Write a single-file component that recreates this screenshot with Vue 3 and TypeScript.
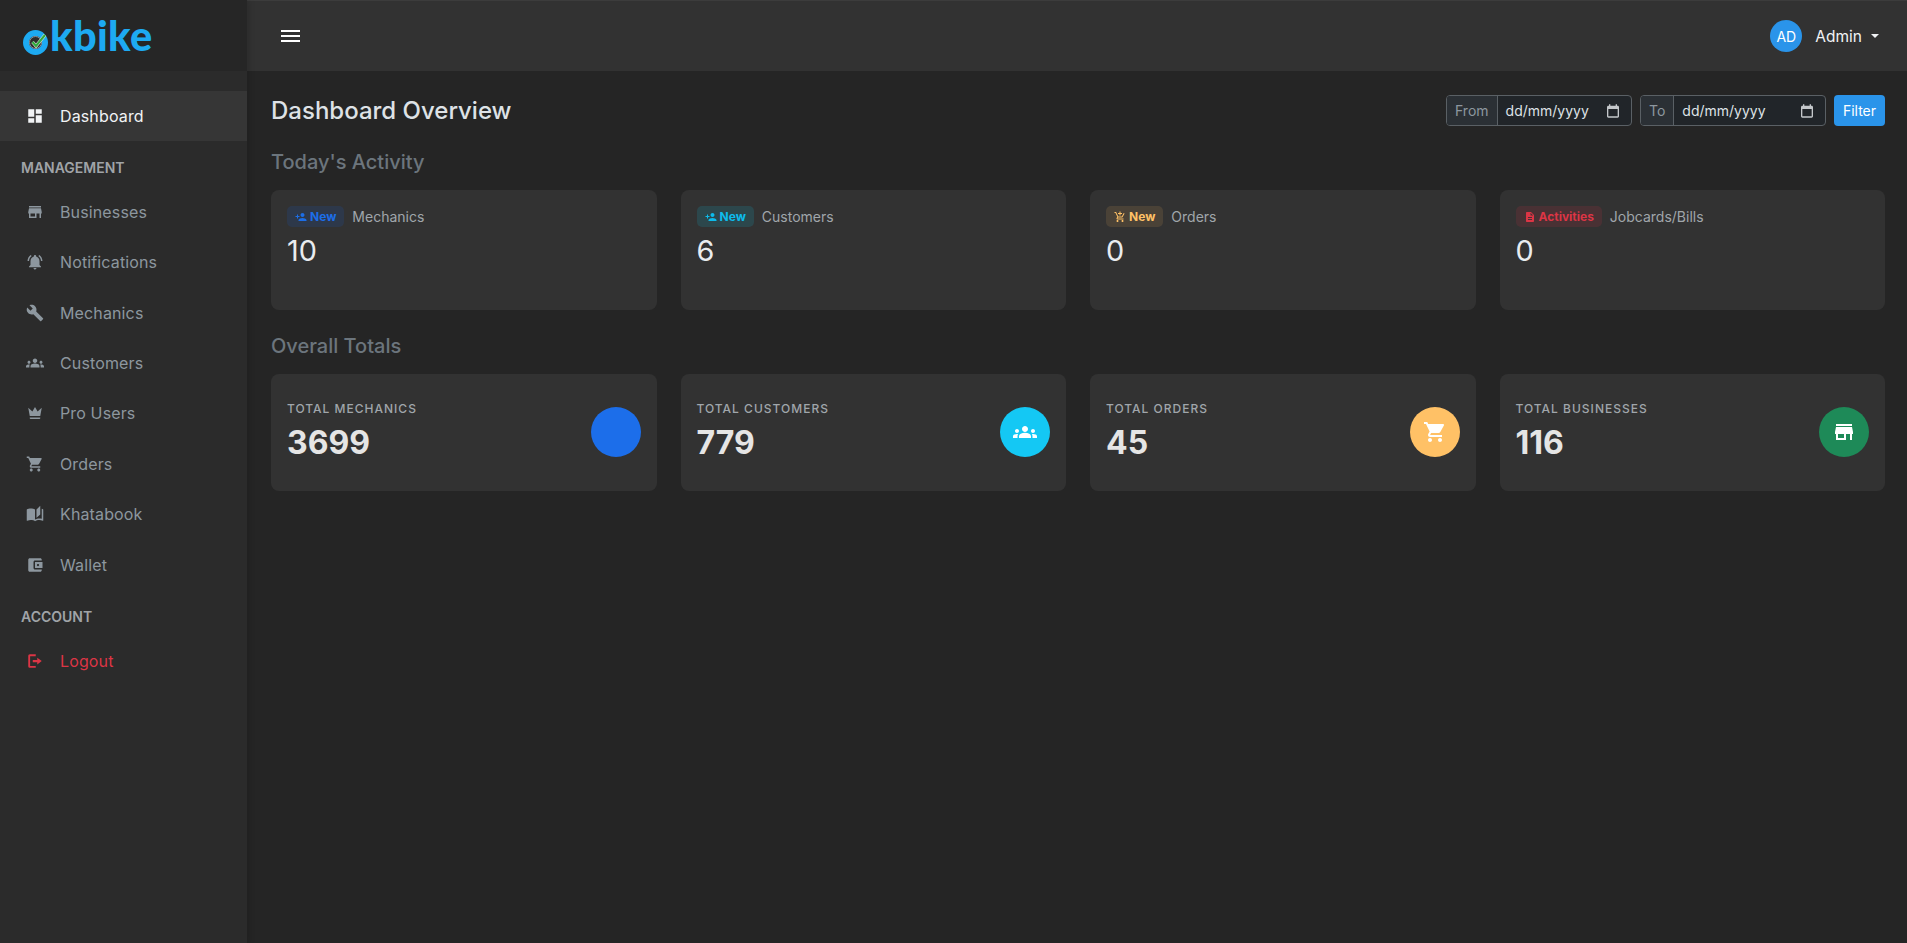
<template>
  <div class="layout">
    <aside class="sidebar">
      <div class="brand" aria-label="okbike">
        <svg class="brand-o" viewBox="0 0 26 26" width="26" height="26">
          <circle cx="12.5" cy="13.5" r="9.5" fill="#262626" stroke="#1daaf2" stroke-width="6" />
          <circle cx="12.5" cy="13.5" r="6" fill="#2d2d2d" stroke="#8f9499" stroke-width="1" />
          <path d="M9.5 13l3.5 4 9-11" fill="none" stroke="#d5e4d5" stroke-width="3.2" />
          <path d="M9.5 13l3.5 4 9-11" fill="none" stroke="#2fa83c" stroke-width="2" />
        </svg>
        <span class="brand-text">kbike</span>
      </div>
      <nav class="nav">
        <template v-for="entry in navEntries" :key="entry.label">
          <div v-if="entry.heading" class="nav-heading">{{ entry.label }}</div>
          <a v-else class="nav-item" :class="entry.kind">
            <svg viewBox="0 0 24 24" class="nav-icon"><path :d="entry.icon" /></svg>
            <span>{{ entry.label }}</span>
          </a>
        </template>
      </nav>
    </aside>

    <div class="page">
      <header class="topbar">
        <button class="burger" aria-label="menu"><i></i><i></i><i></i></button>
        <div class="user">
          <span class="avatar">AD</span>
          <span class="user-name">Admin</span>
          <span class="caret"></span>
        </div>
      </header>

      <main class="content">
        <div class="title-row">
          <h1>Dashboard Overview</h1>
          <div class="filters">
            <div v-for="range in ['From', 'To']" :key="range" class="date-group" :class="range.toLowerCase()">
              <span class="date-label">{{ range }}</span>
              <span class="date-input">
                <span>dd/mm/yyyy</span>
                <svg viewBox="0 0 24 24" width="16" height="16"><path :d="icons.calendar" /></svg>
              </span>
            </div>
            <button class="filter-btn">Filter</button>
          </div>
        </div>

        <h2>Today's Activity</h2>
        <section class="card-grid">
          <div v-for="card in activity" :key="card.label" class="card activity-card">
            <div class="activity-head">
              <span class="badge" :class="card.tone">
                <svg viewBox="0 0 24 24" width="12" height="12"><path :d="card.icon" /></svg>
                {{ card.badge }}
              </span>
              <span class="activity-label">{{ card.label }}</span>
            </div>
            <div class="activity-value">{{ card.value }}</div>
          </div>
        </section>

        <h2>Overall Totals</h2>
        <section class="card-grid">
          <div v-for="card in totals" :key="card.label" class="card total-card">
            <div class="total-text">
              <div class="total-label">{{ card.label }}</div>
              <div class="total-value">{{ card.value }}</div>
            </div>
            <span class="total-icon" :class="card.tone">
              <svg v-if="card.icon" viewBox="0 0 24 24" width="24" height="24"><path :d="card.icon" /></svg>
            </span>
          </div>
        </section>
      </main>
    </div>
  </div>
</template>

<script setup lang="ts">
type NavEntry = {
  label: string;
  heading?: boolean;
  icon?: string;
  kind?: string;
};

const icons = {
  dashboard: "M3 13h8V3H3v10zm0 8h8v-6H3v6zm10 0h8V11h-8v10zm0-18v6h8V3h-8z",
  store: "M20 4H4v2h16V4zm1 10v-2l-1-5H4l-1 5v2h1v6h10v-6h4v6h2v-6h1zm-9 4H6v-4h6v4z",
  bell: "M7.58 4.08L6.15 2.65C3.75 4.48 2.17 7.3 2.03 10.5h2c.15-2.65 1.51-4.97 3.55-6.42zm12.39 6.42h2c-.15-3.2-1.73-6.02-4.12-7.85l-1.42 1.43c2.02 1.45 3.39 3.77 3.54 6.42zM18 11c0-3.07-1.64-5.64-4.5-6.32V4c0-.83-.67-1.5-1.5-1.5s-1.5.67-1.5 1.5v.68C7.63 5.36 6 7.92 6 11v5l-2 2v1h16v-1l-2-2v-5zm-6 11c.14 0 .27-.01.4-.04.65-.14 1.18-.58 1.44-1.18.1-.24.15-.5.15-.78h-4c.01 1.1.9 2 2.01 2z",
  wrench: "M22.7 19l-9.1-9.1c.9-2.3.4-5-1.5-6.9-2-2-5-2.4-7.4-1.3L9 6 6 9 1.6 4.7C.4 7.1.9 10.1 2.9 12.1c1.9 1.9 4.6 2.4 6.9 1.5l9.1 9.1c.4.4 1 .4 1.4 0l2.3-2.3c.5-.4.5-1.1.1-1.4z",
  groups: "M12 12.75c1.63 0 3.07.39 4.24.9 1.08.48 1.76 1.56 1.76 2.73V18H6v-1.61c0-1.18.68-2.26 1.76-2.73 1.17-.52 2.61-.91 4.24-.91zM4 13c1.1 0 2-.9 2-2s-.9-2-2-2-2 .9-2 2 .9 2 2 2zm1.13 1.1c-.37-.06-.74-.1-1.13-.1-.99 0-1.93.21-2.78.58C.48 14.9 0 15.62 0 16.43V18h4.5v-1.61c0-.83.23-1.61.63-2.29zM20 13c1.1 0 2-.9 2-2s-.9-2-2-2-2 .9-2 2 .9 2 2 2zm4 3.43c0-.81-.48-1.53-1.22-1.85-.85-.37-1.79-.58-2.78-.58-.39 0-.76.04-1.13.1.4.68.63 1.46.63 2.29V18H24v-1.57zM12 6c1.66 0 3 1.34 3 3s-1.34 3-3 3-3-1.34-3-3 1.34-3 3-3z",
  crown: "M5 16L3 5l5.5 5L12 4l3.5 6L21 5l-2 11H5zm14 3c0 .6-.4 1-1 1H6c-.6 0-1-.4-1-1v-1h14v1z",
  cart: "M7 18c-1.1 0-1.99.9-1.99 2S5.9 22 7 22s2-.9 2-2-.9-2-2-2zM1 2v2h2l3.6 7.59-1.35 2.45c-.16.28-.25.61-.25.96 0 1.1.9 2 2 2h12v-2H7.42c-.14 0-.25-.11-.25-.25l.03-.12.9-1.63h7.45c.75 0 1.41-.41 1.75-1.03l3.58-6.49c.08-.14.12-.31.12-.48 0-.55-.45-1-1-1H5.21l-.94-2H1zm16 16c-1.1 0-1.99.9-1.99 2s.89 2 1.99 2 2-.9 2-2-.9-2-2-2z",
  book: "M19 1l-5 5v11l5-4.5V1zM1 6v14.65c0 .25.25.5.5.5.1 0 .15-.05.25-.05C3.1 20.45 5.05 20 6.5 20c1.95 0 4.05.4 5.5 1.5V6c-1.45-1.1-3.55-1.5-5.5-1.5S2.45 4.9 1 6zm22 13.5V6c-.6-.45-1.25-.8-2-1.05v13.5c-1.1-.35-2.3-.5-3.5-.5-1.7 0-4.15.65-5.5 1.5v2.05c1.35-.85 3.8-1.5 5.5-1.5 1.65 0 3.35.3 4.75 1.05.1.05.15.05.25.05.25 0 .5-.25.5-.5v-1z",
  wallet: "M21 18v1c0 1.1-.9 2-2 2H5c-1.11 0-2-.9-2-2V5c0-1.1.89-2 2-2h14c1.1 0 2 .9 2 2v1h-9c-1.11 0-2 .9-2 2v8c0 1.1.89 2 2 2h9zm-9-2h10V8H12v8zm4-2.5c-.83 0-1.5-.67-1.5-1.5s.67-1.5 1.5-1.5 1.5.67 1.5 1.5-.67 1.5-1.5 1.5z",
  logout: "M13 3H5a2 2 0 0 0-2 2v14a2 2 0 0 0 2 2h8v-2.5H5.5v-13H13V3zM15 7.5v3H9v3h6v3l6-4.5z",
  personAdd: "M15 12c2.21 0 4-1.79 4-4s-1.79-4-4-4-4 1.79-4 4 1.79 4 4 4zm-9-2V7H4v3H1v2h3v3h2v-3h3v-2H6zm9 4c-2.67 0-8 1.34-8 4v2h16v-2c0-2.66-5.33-4-8-4z",
  cartAdd: "M11 9h2V6h3V4h-3V1h-2v3H8v2h3v3zm-4 9c-1.1 0-1.99.9-1.99 2S5.9 22 7 22s2-.9 2-2-.9-2-2-2zm10 0c-1.1 0-1.99.9-1.99 2s.89 2 1.99 2 2-.9 2-2-.9-2-2-2zm-9.83-3.25l.03-.12.9-1.63h7.45c.75 0 1.41-.39 1.75-1.03l3.86-7.01L19.42 4h-.01l-1.1 2-2.76 5H8.53l-.13-.27L6.16 6l-.95-2-.94-2H1v2h2l3.6 7.59-1.35 2.45c-.16.28-.25.61-.25.96 0 1.1.9 2 2 2h12v-2H7.42c-.13 0-.25-.11-.25-.25z",
  doc: "M14 2H6c-1.1 0-1.99.9-1.99 2L4 20c0 1.1.89 2 1.99 2H18c1.1 0 2-.9 2-2V8l-6-6zm2 16H8v-2h8v2zm0-4H8v-2h8v2zm-3-5V3.5L18.5 9H13z",
  calendar: "M19 4h-1V2h-2v2H8V2H6v2H5c-1.1 0-2 .9-2 2v14c0 1.1.9 2 2 2h14c1.1 0 2-.9 2-2V6c0-1.1-.9-2-2-2zm0 16H5V9h14v11z",
};

const navEntries: NavEntry[] = [
  { label: "Dashboard", icon: icons.dashboard, kind: "active" },
  { label: "MANAGEMENT", heading: true },
  { label: "Businesses", icon: icons.store },
  { label: "Notifications", icon: icons.bell },
  { label: "Mechanics", icon: icons.wrench },
  { label: "Customers", icon: icons.groups },
  { label: "Pro Users", icon: icons.crown },
  { label: "Orders", icon: icons.cart },
  { label: "Khatabook", icon: icons.book },
  { label: "Wallet", icon: icons.wallet },
  { label: "ACCOUNT", heading: true },
  { label: "Logout", icon: icons.logout, kind: "danger" },
];

const activity = [
  { badge: "New", label: "Mechanics", value: 10, tone: "blue", icon: icons.personAdd },
  { badge: "New", label: "Customers", value: 6, tone: "cyan", icon: icons.personAdd },
  { badge: "New", label: "Orders", value: 0, tone: "amber", icon: icons.cartAdd },
  { badge: "Activities", label: "Jobcards/Bills", value: 0, tone: "red", icon: icons.doc },
];

const totals = [
  { label: "TOTAL MECHANICS", value: 3699, tone: "blue", icon: "" },
  { label: "TOTAL CUSTOMERS", value: 779, tone: "cyan", icon: icons.groups },
  { label: "TOTAL ORDERS", value: 45, tone: "amber", icon: icons.cart },
  { label: "TOTAL BUSINESSES", value: 116, tone: "green", icon: icons.store },
];
</script>

<style>
body {
  background: #252525;
}
</style>

<style scoped>
.layout {
  display: flex;
  min-height: 943px;
  font-family: Inter, "Liberation Sans", sans-serif;
  color: #dee2e6;
  background: #252525;
}

.sidebar {
  width: 247px;
  flex: none;
  background: #2b2b2b;
  box-shadow: 2px 0 6px rgba(0, 0, 0, 0.15);
  position: relative;
  z-index: 1;
}
.brand {
  height: 71px;
  box-sizing: border-box;
  padding: 0 0 0 23px;
  display: flex;
  align-items: center;
  background: #262626;
}
.brand-o {
  flex: none;
  margin-top: 12px;
}
.brand-text {
  font-family: Lato, "Open Sans", sans-serif;
  font-weight: 900;
  font-size: 41.5px;
  line-height: 1;
  color: #1daaf2;
  letter-spacing: 0.3px;
  margin-left: 1px;
  margin-top: 1px;
}
.nav {
  padding-top: 20px;
}
.nav-heading {
  height: 45.6px;
  box-sizing: border-box;
  padding: 16px 0 0 21px;
  font-size: 14px;
  line-height: 21px;
  font-weight: 600;
  color: #a0a4a8;
}
.nav-item {
  display: flex;
  align-items: center;
  height: 50.4px;
  padding-left: 26px;
  font-size: 16px;
  letter-spacing: 0.13px;
  color: #8d979f;
}
.nav-icon {
  width: 18px;
  height: 18px;
  margin-right: 16px;
  fill: currentColor;
}
.nav-item.active {
  height: 50px;
  background: #363636;
  color: #f1f3f5;
}
.nav-item.danger {
  color: #dc3545;
}

.page {
  flex: 1;
  min-width: 0;
}
.topbar {
  height: 71px;
  box-sizing: border-box;
  display: flex;
  align-items: center;
  justify-content: space-between;
  padding: 0 28px 0 34px;
  background: #323232;
  border-top: 1px solid #3c3c3c;
}
.burger {
  width: 19px;
  padding: 0;
  margin: 0;
  border: 0;
  background: none;
  display: flex;
  flex-direction: column;
  gap: 3px;
}
.burger i {
  display: block;
  height: 2px;
  background: #fff;
}
.user {
  display: flex;
  align-items: center;
  font-size: 15.5px;
  color: #f1f3f5;
}
.avatar {
  width: 32px;
  height: 32px;
  border-radius: 50%;
  background: #2a94ea;
  display: flex;
  align-items: center;
  justify-content: center;
  font-size: 14px;
  color: #fff;
  margin-right: 13px;
}
.caret {
  margin-left: 9px;
  border-top: 4px solid #f1f3f5;
  border-left: 4px solid transparent;
  border-right: 4px solid transparent;
}

.content {
  padding: 24px 22px 24px 24px;
}
.title-row {
  display: flex;
  justify-content: space-between;
  align-items: center;
  height: 31px;
}
h1 {
  margin: 0;
  font-size: 24px;
  line-height: 31px;
  font-weight: 500;
  color: #dee2e6;
}
h2 {
  margin: 24px 0 16px;
  font-size: 20px;
  line-height: 24px;
  font-weight: 500;
  color: #6c757d;
}
.filters {
  display: flex;
  gap: 8px;
  font-size: 14px;
}
.date-group {
  display: flex;
  width: 186px;
  height: 31px;
  box-sizing: border-box;
  border: 1px solid #5a6065;
  border-radius: 4px;
  background: #212529;
}
.date-label {
  display: flex;
  align-items: center;
  padding: 0 8px;
  color: #8d979f;
  background: #2b3035;
  border-right: 1px solid #5a6065;
  border-radius: 3px 0 0 3px;
}
.date-input {
  flex: 1;
  display: flex;
  align-items: center;
  justify-content: space-between;
  padding: 0 10px 0 8px;
  color: #dee2e6;
}
.date-input svg {
  fill: #c4c7ca;
}
.filter-btn {
  width: 51px;
  height: 31px;
  padding: 0;
  border: 0;
  border-radius: 4px;
  background: #2a94ea;
  color: #fff;
  font: inherit;
}

.card-grid {
  display: grid;
  grid-template-columns: repeat(4, 1fr);
  gap: 24px;
}
.card {
  box-sizing: border-box;
  padding: 16px;
  background: #323232;
  border-radius: 8px;
}
.activity-card {
  height: 120px;
}
.activity-head {
  display: flex;
  align-items: center;
  gap: 8px;
}
.badge {
  display: flex;
  align-items: center;
  gap: 3px;
  height: 21px;
  padding: 0 8px;
  border-radius: 5px;
  font-size: 12px;
  font-weight: 700;
}
.badge svg {
  fill: currentColor;
}
.badge.blue {
  color: #1c6ee8;
  background: rgba(13, 110, 253, 0.12);
}
.badge.cyan {
  color: #0dbcec;
  background: rgba(13, 202, 240, 0.14);
}
.badge.amber {
  color: #ffc166;
  background: rgba(255, 193, 102, 0.12);
}
.badge.red {
  color: #dc3545;
  background: rgba(220, 53, 69, 0.14);
}
.activity-label {
  font-size: 14px;
  color: #a0a6ab;
}
.activity-value {
  margin-top: 6px;
  font-size: 28.8px;
  line-height: 36px;
  color: #e9ecef;
}
.total-card {
  height: 117px;
  display: flex;
  align-items: center;
  justify-content: space-between;
}
.total-text {
  padding-bottom: 2.5px;
}
.total-label {
  font-size: 12px;
  line-height: 18px;
  font-weight: 500;
  letter-spacing: 1px;
  color: #a0a6ab;
}
.total-value {
  font-size: 32px;
  line-height: 40px;
  font-weight: 700;
  color: #e5e5e5;
  margin-top: 4.5px;
}
.total-icon {
  width: 50px;
  height: 50px;
  margin-bottom: 1px;
  border-radius: 50%;
  display: flex;
  align-items: center;
  justify-content: center;
}
.total-icon svg {
  fill: #fff;
}
.total-icon.blue {
  background: #1c6eea;
}
.total-icon.cyan {
  background: #14c8f4;
}
.total-icon.amber {
  background: #ffc166;
}
.total-icon.green {
  background: #1e8a58;
}
</style>
